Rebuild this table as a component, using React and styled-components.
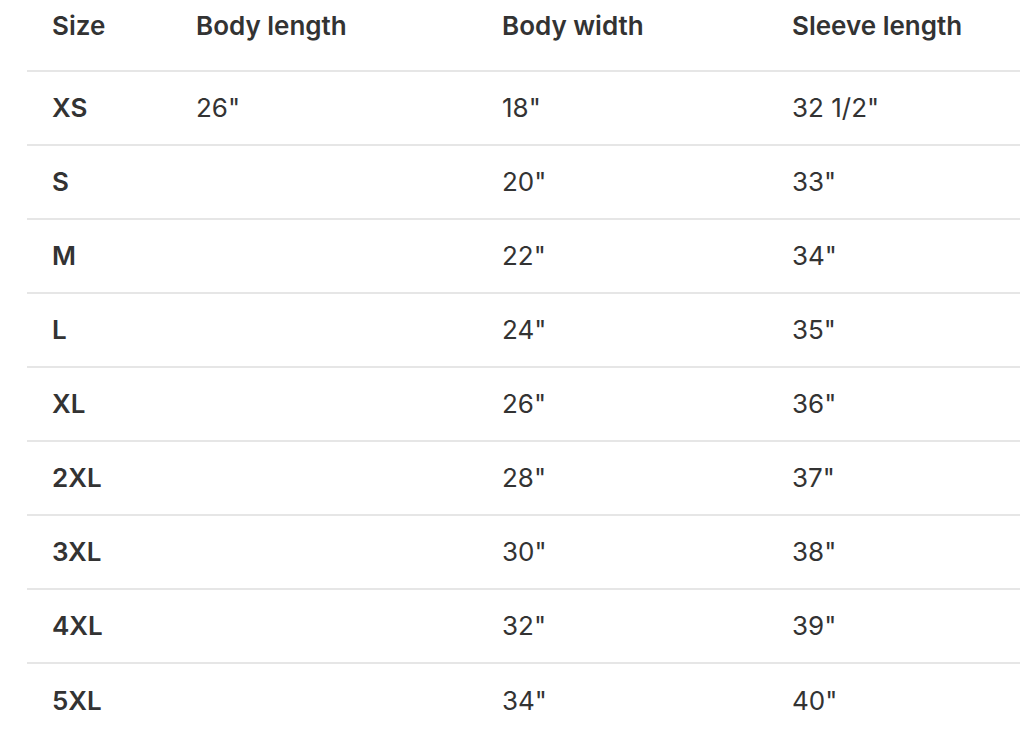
import React from "react";
import styled, { createGlobalStyle } from "styled-components";

const Global = createGlobalStyle`
  html, body { margin: 0; padding: 0; background: #fff; overflow: hidden; }
  body { font-family: Inter, "Noto Sans", sans-serif; color: #333; }
`;

const Table = styled.div`
  margin-left: 27px;
  width: 1040px;
  display: grid;
  grid-template-columns: 144px 306px 290px 1fr;
`;

const HeadCell = styled.div`
  height: 72px;
  box-sizing: border-box;
  padding: 10px 0 0 25px;
  display: flex;
  align-items: flex-start;
  font-size: 26px;
  font-weight: 600;
  line-height: 32px;
  color: #333;
  border-bottom: 2px solid #e6e6e6;
`;

const Cell = styled.div`
  height: 74px;
  box-sizing: border-box;
  padding: 0 0 2px 25px;
  display: flex;
  align-items: center;
  font-size: 26px;
  font-weight: ${(p) => (p.$bold ? 600 : 400)};
  color: #333;
  border-bottom: ${(p) => (p.$last ? "none" : "2px solid #e6e6e6")};
`;

const headers = ["Size", "Body length", "Body width", "Sleeve length"];
const rows = [
  ["XS", "26\"", "18\"", "32 1/2\""],
  ["S", "", "20\"", "33\""],
  ["M", "", "22\"", "34\""],
  ["L", "", "24\"", "35\""],
  ["XL", "", "26\"", "36\""],
  ["2XL", "", "28\"", "37\""],
  ["3XL", "", "30\"", "38\""],
  ["4XL", "", "32\"", "39\""],
  ["5XL", "", "34\"", "40\""],
];

export default function App() {
  return (
    <>
      <Global />
      <Table>
        {headers.map((h) => (
          <HeadCell key={h}>{h}</HeadCell>
        ))}
        {rows.map((r, i) =>
          r.map((c, j) => (
            <Cell key={`${i}-${j}`} $bold={j === 0} $last={i === rows.length - 1}>
              {c}
            </Cell>
          ))
        )}
      </Table>
    </>
  );
}
